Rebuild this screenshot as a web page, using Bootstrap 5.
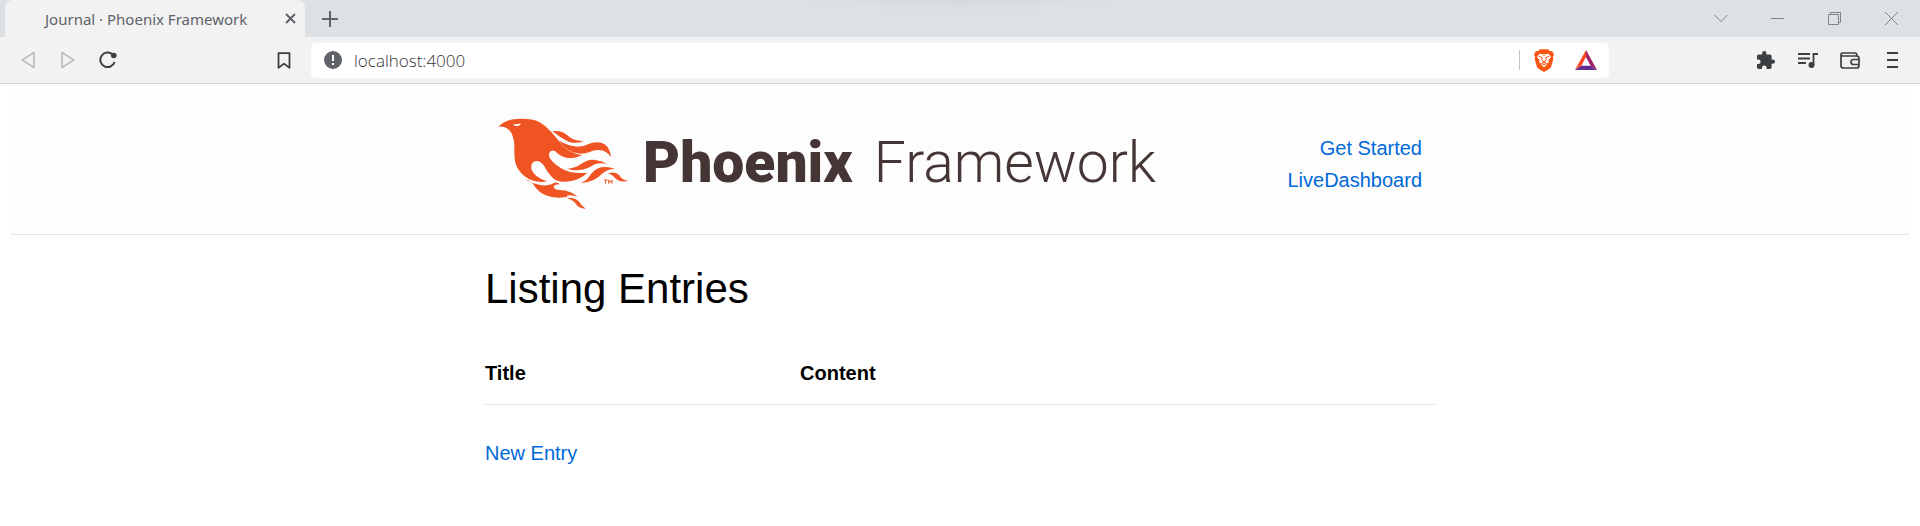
<!DOCTYPE html>
<html lang="en">
<head>
<meta charset="utf-8">
<meta name="viewport" content="width=device-width, initial-scale=1">
<title>Journal · Phoenix Framework</title>
<link href="https://cdn.jsdelivr.net/npm/bootstrap@5.3.0/dist/css/bootstrap.min.css" rel="stylesheet">
<style>
  body { font-family: "Liberation Sans", Arial, sans-serif; font-size: 20px; line-height: 32px; color: #000; background: #fff; }
  svg { display: block; flex: none; }
  .icon-btn { display: flex; align-items: center; justify-content: center; flex: none; padding: 0; border: 0; background: none; color: #3b3e42; }
  .tab-strip { height: 37px; background: radial-gradient(ellipse 150px 10px at 50% 0, #d5d9dc, #dde1e4) no-repeat #dde1e4; padding-left: 5px; }
  .browser-tab { width: 300px; background: #f2f2f2; border-radius: 8px 8px 0 0; padding-left: 40px; font: 15px/36px "Noto Sans", sans-serif; color: #5f6368; }
  .tab-close { width: 30px; height: 37px; }
  .tab-new { width: 50px; }
  .tab-close, .tab-new { color: #5f6368; }
  .win-btn { width: 57px; color: #808488; }
  .toolbar { height: 47px; background: #f2f2f2; border-bottom: 1px solid #d4d5d6; padding: 0 7px 0 8px; }
  .nav-tools { width: 303px; padding-right: 7px; }
  .nav-tools .icon-btn { width: 40px; height: 46px; }
  .nav-tools .icon-btn:disabled { color: #bdbec0; }
  .ext-tools { width: 304px; }
  .ext-tools .icon-btn { width: 42px; height: 46px; }
  .url-box { height: 35px; background: #fff; border-radius: 5px; padding: 0 12px 0 13px; }
  .url-box input { border: 0; outline: 0; padding: 0; margin-left: 12px; background: none; font: 17px/35px "Open Sans", sans-serif; font-weight: 300; color: #333; min-width: 0; }
  .url-rule { width: 1px; height: 20px; background: #c4c6c8; margin-right: 14px; }
  .shield-btn { margin-right: 21px; }
  .site { padding: 10px; }
  .site-header { background: #fdfdfd; border-bottom: 1px solid #e6e6e6; }
  .site-wrap { max-width: 950px; width: 100%; margin: 0 auto; }
  .site-header .site-wrap { height: 140px; padding: 0 13px; }
  .site a { color: #0069d9; text-decoration: none; }
  .site .brand-link { color: #463535; font: 900 57px/64px Roboto, sans-serif; gap: 14px; }
  .brand-name { padding-bottom: 2px; }
  .thin-word { font-weight: 300; margin-left: 7px; }
  .page-title { font-size: 42px; line-height: 50px; font-weight: 400; margin: 29px 0 28px; }
  .entries { width: 100%; margin-bottom: 32px; }
  .entries th { padding: 15px 0; border-bottom: 1px solid #e1e1e1; }
  .entries th:first-child { width: 315px; }
</style>
</head>
<body>
<div class="tab-strip d-flex">
  <div class="browser-tab d-flex align-items-center justify-content-between">
    <span>Journal · Phoenix Framework</span>
    <button class="icon-btn tab-close" aria-label="Close tab"><svg width="11" height="11" viewBox="0 0 11 11" stroke="currentColor" stroke-width="2"><path d="M1 1l9 9M10 1l-9 9"/></svg></button>
  </div>
  <button class="icon-btn tab-new" aria-label="New tab"><svg width="16" height="16" viewBox="0 0 16 16" stroke="currentColor" stroke-width="2"><path d="M8 0v16M0 8h16"/></svg></button>
  <div class="d-flex ms-auto">
    <button class="icon-btn win-btn" aria-label="Search tabs"><svg width="14" height="9" viewBox="0 0 14 9" fill="none" stroke="currentColor"><path d="M.5 1L7 7.500 13.500 1"/></svg></button>
    <button class="icon-btn win-btn" aria-label="Minimize"><svg width="13" height="13" viewBox="0 0 13 13" stroke="currentColor"><path d="M0 6.500h13"/></svg></button>
    <button class="icon-btn win-btn" aria-label="Restore"><svg width="13" height="13" viewBox="0 0 13 13" fill="none" stroke="currentColor"><path d="M.5 2.500h10v10H.5zM2.500 2.500v-2h10v10h-2"/></svg></button>
    <button class="icon-btn win-btn" aria-label="Close"><svg width="13" height="13" viewBox="0 0 13 13" stroke="currentColor"><path d="M0 0l13 13M13 0L0 13"/></svg></button>
  </div>
</div>
<div class="toolbar d-flex align-items-center">
  <div class="nav-tools d-flex flex-shrink-0">
    <button class="icon-btn" disabled aria-label="Back"><svg width="14" height="18" viewBox="0 0 14 18" fill="none" stroke="currentColor" stroke-width="1.700" stroke-linejoin="round"><path d="M13 1.500v15L1.200 9z"/></svg></button>
    <button class="icon-btn" disabled aria-label="Forward"><svg width="14" height="18" viewBox="0 0 14 18" fill="none" stroke="currentColor" stroke-width="1.700" stroke-linejoin="round"><path d="M1 1.500v15L12.800 9z"/></svg></button>
    <button class="icon-btn" aria-label="Reload"><svg width="18" height="18" viewBox="0 0 18 18" fill="none" stroke="currentColor" stroke-width="2"><path d="M13.500 3.300A7.300 7.300 0 1 0 15.600 11"/><circle cx="14.800" cy="4.500" r="2.800" fill="currentColor" stroke="none"/></svg></button>
    <button class="icon-btn ms-auto" aria-label="Bookmark"><svg width="14" height="17" viewBox="0 0 14 17" fill="none" stroke="currentColor" stroke-width="1.800" stroke-linejoin="round"><path d="M1.500 1.200h11v14.600L7 11.600l-5.500 4.200z"/></svg></button>
  </div>
  <div class="url-box d-flex align-items-center flex-grow-1">
    <svg width="18" height="18" viewBox="0 0 18 18"><circle cx="9" cy="9" r="9" fill="#5f6368"/><path d="M9 4v6M9 12v2" stroke="#fff" stroke-width="2"/></svg>
    <input class="flex-grow-1" type="text" value="localhost:4000" aria-label="Address">
    <span class="url-rule"></span>
    <button class="icon-btn shield-btn" aria-label="Brave Shields"><svg width="20" height="23" viewBox="0 0 60 69"><path fill="#fb5413" d="M18 1h24l6 6 6-1 6 10-3 8 1 7-7 23q-1 4-21 15Q10 58 9 54L2 31l1-7-3-8L6 6l6 1z"/><path fill="#fff" d="M17 14l8 2h10l8-2 8 10-8 10 2 5-6 5-4-4-5-2-5 2-4 4-6-5 2-5-8-10zM21 47l9-6 9 6-9 8z"/><path fill="none" stroke="#fb5413" stroke-width="3" d="M15 22l10 4-3 6 8 6 8-6-3-6 10-4M30 17v4M25 47h10"/></svg></button>
    <button class="icon-btn" aria-label="Rewards"><svg width="22" height="20" viewBox="0 0 66 60"><path fill="#ff4724" d="M33 0L0 60l19-13 14-26z"/><path fill="#9e1f63" d="M33 0l33 60-19-13-14-26z"/><path fill="#662d91" d="M0 60h66L47 47H19z"/></svg></button>
  </div>
  <div class="ext-tools d-flex justify-content-end flex-shrink-0">
    <button class="icon-btn" aria-label="Extensions"><svg width="18" height="18" viewBox="2 1 21 21" fill="currentColor"><path d="M20.500 11H19V7c0-1.100-.9-2-2-2h-4V3.500a2.500 2.500 0 0 0-5 0V5H4c-1.100 0-2 .9-2 2v3.800h1.500a2.700 2.700 0 0 1 0 5.400H2V20c0 1.100.9 2 2 2h3.800v-1.500a2.700 2.700 0 0 1 5.400 0V22H17c1.100 0 2-.9 2-2v-4h1.500a2.500 2.500 0 0 0 0-5z"/></svg></button>
    <button class="icon-btn" aria-label="Media controls"><svg width="20" height="17" viewBox="0 0 20 17" fill="none" stroke="currentColor" stroke-width="1.800"><path d="M0 2h12M0 6.500h12M0 11h8M15.500 13V2H20"/><circle cx="13.500" cy="13" r="3" fill="currentColor" stroke="none"/></svg></button>
    <button class="icon-btn" aria-label="Wallet"><svg width="20" height="17" viewBox="0 0 20 17" fill="none" stroke="currentColor" stroke-width="1.700"><path d="M1 3.500v10q0 2.500 2.500 2.500h13q2.500 0 2.500-2.500v-7Q19 4 16.500 4H3Q1 4 1 2.500T3 1h12q2 0 2 3M19 7.500h-5.500a2.500 2.500 0 0 0 0 5H19"/></svg></button>
    <button class="icon-btn" aria-label="Menu"><svg width="11" height="16" viewBox="0 0 11 16" stroke="currentColor" stroke-width="2"><path d="M0 1h11M0 8h11M0 15h11"/></svg></button>
  </div>
</div>
<div class="site">
  <header class="site-header">
    <div class="site-wrap d-flex align-items-center justify-content-between">
      <a href="#" class="brand-link d-flex align-items-center">
        <svg width="131" height="92" viewBox="54 54 393 276" fill="#f05423" aria-hidden="true">
          <path d="M54 80Q78 58 108 57 152 54 178 66 196 76 214 96 232 117 246 134 264 158 306 165 288 176 262 174 240 170 226 154 214 147 208 158 203 170 218 185 242 208 270 216 296 221 322 218 304 236 274 243 240 250 222 237 205 223 193 199 180 180 164 184 150 192 155 209 162 230 201 244 172 250 148 238 118 222 107 192 103 178 103 150 104 118 94 98 80 78 54 80z"/>
          <path fill="#fdfdfd" d="M99 72q12 2 24-2-2 8-11 9-9 0-13-7z"/>
          <path d="M217 94q28-4 45 12 20 19 50 17-24 10-46 2-26-12-49-31zM237 121q25 18 56 19 22-1 39-10 25-8 42 3 16 12 19 38-16-22-37-21-15 0-29 7-22 8-48 0-26-8-42-36zM262 206q24-1 40-13 22-18 44-13 22 3 36 12-22-5-38 1-24 16-45 17-20 2-37-4zM301 248q18-5 26-18 15-22 36-28 22-4 42 5-22 0-37 13-30 31-67 28zM384 221q22-9 34 5 9 16 27 16-22 7-38-6-10-14-23-15zM134 237q23 14 51 19 24 2 36-7 14-4 18 4-14 0-18 7 0 9 18 10 35 1 54 21-15-8-32-4v4q-38 6-63-5-18-6-32-24-10-20-32-25zM259 295q24-5 37 9 7 12 21 22-17 1-29-13-8-14-29-18z"/>
          <path fill="none" stroke="#f05423" stroke-width="3" d="M372 240h11M377 240v11M386 251v-11l5 7 5-7v11"/>
        </svg>
        <span class="brand-name text-nowrap">Phoenix <span class="thin-word">Framework</span></span>
      </a>
      <nav class="text-end">
        <a class="d-block" href="#">Get Started</a>
        <a class="d-block" href="#">LiveDashboard</a>
      </nav>
    </div>
  </header>
  <main class="site-wrap">
    <h1 class="page-title">Listing Entries</h1>
    <table class="entries">
      <thead><tr><th scope="col">Title</th><th scope="col">Content</th></tr></thead>
      <tbody></tbody>
    </table>
    <a href="#">New Entry</a>
  </main>
</div>
<script src="https://cdn.jsdelivr.net/npm/bootstrap@5.3.0/dist/js/bootstrap.bundle.min.js"></script>
</body>
</html>
